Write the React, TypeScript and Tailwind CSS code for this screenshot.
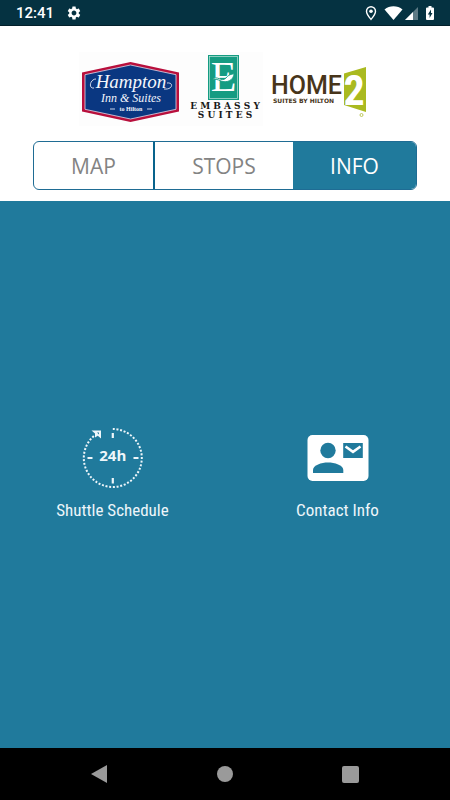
import { useState } from "react";

function StatusBar() {
  return (
    <header className="flex h-[26px] items-center justify-between border-b border-[#02202b] bg-[#053241] pr-4 pl-4 text-white">
      <div className="flex items-center gap-3">
        <span className="text-[15px] leading-5 font-medium">12:41</span>
        <svg className="size-4" viewBox="0 0 24 24" fill="currentColor" aria-hidden="true">
          <path d="M19.14 12.94c.04-.3.06-.61.06-.94 0-.32-.02-.64-.07-.94l2.03-1.58c.18-.14.23-.41.12-.61l-1.92-3.32c-.12-.22-.37-.29-.59-.22l-2.39.96c-.5-.38-1.03-.7-1.62-.94l-.36-2.54c-.04-.24-.24-.41-.48-.41h-3.84c-.24 0-.43.17-.47.41l-.36 2.54c-.59.24-1.13.57-1.62.94l-2.39-.96c-.22-.08-.47 0-.59.22L2.74 8.87c-.12.21-.08.47.12.61l2.03 1.58c-.05.3-.09.63-.09.94s.02.64.07.94l-2.03 1.58c-.18.14-.23.41-.12.61l1.92 3.32c.12.22.37.29.59.22l2.39-.96c.5.38 1.03.7 1.62.94l.36 2.54c.05.24.24.41.48.41h3.84c.24 0 .44-.17.47-.41l.36-2.54c.59-.24 1.13-.56 1.62-.94l2.39.96c.22.08.47 0 .59-.22l1.92-3.32c.12-.22.07-.47-.12-.61l-2.01-1.58zM12 15.6c-1.98 0-3.6-1.62-3.6-3.6s1.62-3.6 3.6-3.6 3.6 1.62 3.6 3.6-1.62 3.6-3.6 3.6z" />
        </svg>
      </div>
      <svg className="h-[16px] w-[70px]" viewBox="0 0 70 16" aria-hidden="true">
        <path d="M7 1.8A4.5 4.5 0 0 0 2.500 6.300C2.500 9.400 7 14.400 7 14.400S11.500 9.400 11.500 6.300A4.500 4.500 0 0 0 7 1.800Z" fill="none" stroke="#fff" strokeWidth="1.400" />
        <circle cx="7" cy="6.300" r="1.800" fill="#fff" />
        <path d="M20.500 4.500C25.500 0.300 33.500 0.300 38.500 4.500L29.500 15Z" fill="#fff" />
        <path d="M54 2V15H41Z" fill="#5d7a85" />
        <path d="M49 7V15H41Z" fill="#fff" />
        <path d="M64.500 1h3v1.500h1.500a1 1 0 0 1 1 1V14a1 1 0 0 1-1 1h-6a1 1 0 0 1-1-1V3.500a1 1 0 0 1 1-1h1.500Z" fill="#fff" />
        <path d="M67 4.500 63.800 9.500H65.600V13L68.500 8H67Z" fill="#053241" />
      </svg>
    </header>
  );
}

function HamptonLogo() {
  return (
    <svg className="h-[74px] w-[108px] bg-[#fdfdfd]" viewBox="79 52 108 74" role="img" aria-label="Hampton Inn & Suites by Hilton">
      <path d="M130.500 62 179 72.500V111.500L130.500 122 82 111.500V72.500Z" fill="#b80f3c" />
      <path d="M130.500 65 176 74.700V109.300L130.500 119 85 109.300V74.700Z" fill="#0a3781" stroke="#d9dcec" strokeWidth="0.800" />
      <g fill="#f4f6fc" textAnchor="middle" fontFamily="'Liberation Serif', serif">
        <text x="131" y="88" fontSize="19" fontStyle="italic">Hampton</text>
        <text x="131" y="102" fontSize="12" fontStyle="italic">Inn &amp; Suites</text>
        <text x="131" y="111" fontSize="6" fontWeight="bold">to Hilton</text>
      </g>
      <path d="M96 79C90 79 88 89 94 88M167 83C174 82 173 90 164 89M110 109H115M147 109H152" fill="none" stroke="#dfe4f3" strokeWidth="0.900" />
    </svg>
  );
}

function EmbassyLogo() {
  return (
    <svg className="h-[74px] w-[76px] bg-[#fdfdfd]" viewBox="187 52 76 74" role="img" aria-label="Embassy Suites">
      <rect x="208" y="55" width="31" height="45" fill="#159c82" />
      <rect x="209.500" y="56.500" width="28" height="42" fill="none" stroke="#bfe5dc" strokeWidth="0.700" />
      <text x="223.500" y="91" fontSize="42" textAnchor="middle" fill="#fff" fontFamily="'Liberation Serif', serif">E</text>
      <path d="M212 80C217 74 221 83 226 78 230 73 233 75 234 73 234 81 226 83 221 81 217 79 215 79 212 80Z" fill="#fff" stroke="#159c82" strokeWidth="0.900" />
      <g fill="#191919" textAnchor="middle" fontFamily="'DejaVu Serif', serif" fontWeight="bold" fontSize="9">
        <text x="225" y="109">E M B A S S Y</text>
        <text x="225" y="118">S U I T E S</text>
      </g>
    </svg>
  );
}

function HomeLogo() {
  return (
    <svg className="h-[74px] w-[108px]" viewBox="263 52 108 74" role="img" aria-label="Home2 Suites by Hilton">
      <g fill="#48351a">
        <text x="271" y="94" fontSize="25" fontWeight="500" fontFamily="Roboto, sans-serif">HOME</text>
        <text x="273" y="103" fontSize="6" fontWeight="bold" fontFamily="'DejaVu Sans', sans-serif">SUITES BY HILTON</text>
      </g>
      <path d="M344 73.500 366 67V112L344 105Z" fill="#aaba20" />
      <text x="354" y="105" fontSize="42" fontWeight="bold" textAnchor="middle" fill="#fff" fontFamily="'Roboto Condensed', Roboto, sans-serif">2</text>
      <circle cx="361.500" cy="115" r="1.500" fill="none" stroke="#b5c24a" strokeWidth="0.900" />
    </svg>
  );
}

function ScheduleIcon() {
  return (
    <svg className="size-[62px]" viewBox="81.500 427 62 62" aria-hidden="true">
      <path d="M112.300 429A29 29 0 1 1 94 435.500" fill="none" stroke="#eef6fa" strokeWidth="2" strokeDasharray="2 1.700" />
      <path d="M91 430.500H100.500V438.500L97.300 435.700 94.500 437.500V433.500Z" fill="#eef6fa" />
      <path d="M96.500 432.500H98.500V434.500Z" fill="#207a9c" />
      <path d="M112.300 433V438M112.300 478V483.500M87 458H92M133 458H138" stroke="#eef6fa" strokeWidth="2.200" />
      <text x="112.300" y="461" fontSize="15" fontWeight="bold" textAnchor="middle" fill="#eef6fa" fontFamily="'Open Sans', sans-serif">24h</text>
    </svg>
  );
}

function ContactIcon() {
  return (
    <svg className="size-[62px]" viewBox="306.500 427 62 62" aria-hidden="true">
      <rect x="307" y="435" width="61" height="46" rx="5" fill="#fff" />
      <g fill="#207a9c">
        <circle cx="327.500" cy="450.500" r="7.700" />
        <path d="M312.500 473V470C312.500 465 321 462.500 327.500 462.500S342.800 465 342.800 470V473Z" />
        <rect x="342.700" y="443" width="19.600" height="15" />
      </g>
      <path d="M345 446.500 352.500 451.800 360 446.500" fill="none" stroke="#fff" strokeWidth="2.600" />
    </svg>
  );
}

const tabs = ["MAP", "STOPS", "INFO"];

export default function App() {
  const [active, setActive] = useState("INFO");
  return (
    <div className="flex min-h-screen flex-col bg-white font-['Roboto',sans-serif]">
      <StatusBar />
      <div className="flex justify-center pt-[26px]">
        <HamptonLogo />
        <EmbassyLogo />
        <HomeLogo />
      </div>
      <nav className="mx-[33px] mt-[15px] mb-[11px] grid h-[49px] grid-cols-[121fr_138fr_123fr] overflow-hidden rounded-md border border-[#1f6c94] font-['Open_Sans',sans-serif] text-[21px] leading-7">
        {tabs.map((tab) => (
          <button
            key={tab}
            type="button"
            onClick={() => setActive(tab)}
            className={`${active === tab ? "bg-[#207a9c] font-medium text-white" : "text-[#838383]"} ${tab === "MAP" ? "border-r-2 border-[#08638c]" : ""}`}
          >
            {tab}
          </button>
        ))}
      </nav>
      <main className="grid flex-1 grid-cols-2 content-center bg-[#207a9c] font-['Roboto_Condensed',Roboto,sans-serif] text-[#eef6fa]">
        <button type="button" className="flex flex-col items-center gap-[9px]">
          <ScheduleIcon />
          <span className="text-[17px] leading-6">Shuttle Schedule</span>
        </button>
        <button type="button" className="flex flex-col items-center gap-[9px]">
          <ContactIcon />
          <span className="text-[17px] leading-6">Contact Info</span>
        </button>
      </main>
      <footer className="flex h-[52px] justify-center bg-black text-[#9a9a9a]">
        <button type="button" aria-label="Back" className="flex w-[125px] items-center justify-center">
          <svg className="size-[18px]" viewBox="0 0 18 18" fill="currentColor"><path d="M16 0V18L0 9Z" /></svg>
        </button>
        <button type="button" aria-label="Home" className="flex w-[125px] items-center justify-center">
          <span className="size-4 rounded-full bg-current" />
        </button>
        <button type="button" aria-label="Recent apps" className="flex w-[125px] items-center justify-center">
          <span className="size-[17px] rounded-xs bg-current" />
        </button>
      </footer>
    </div>
  );
}
